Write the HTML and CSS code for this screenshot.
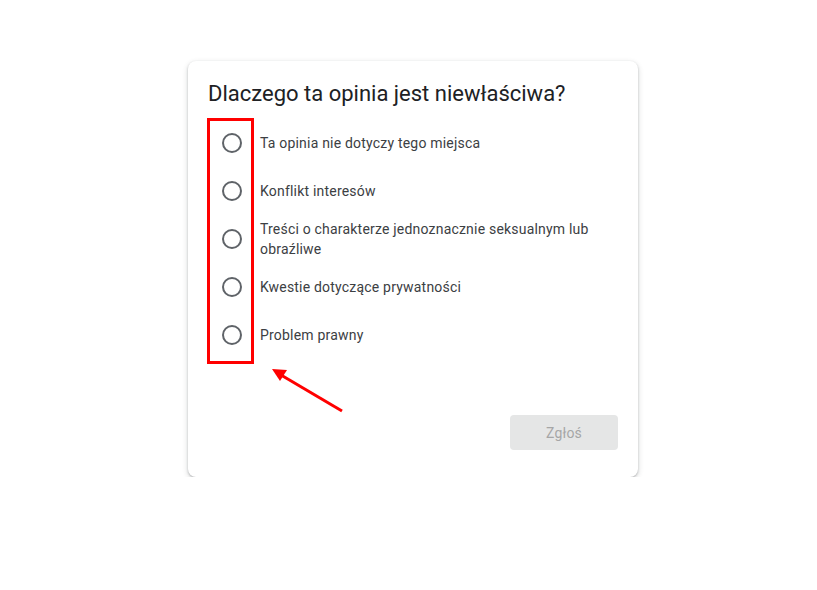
FILE: index.html
```html
<!DOCTYPE html>
<html lang="pl">
<head>
<meta charset="utf-8">
<link rel="stylesheet" href="styles.css">
</head>
<body>
<div class="page">
  <div class="card">
    <h1 class="title">Dlaczego ta opinia jest niewłaściwa?</h1>
    <div class="options">
      <div class="highlight"></div>
      <label class="option"><span class="radio"></span><span class="label">Ta opinia nie dotyczy tego miejsca</span></label>
      <label class="option"><span class="radio"></span><span class="label">Konflikt interesów</span></label>
      <label class="option"><span class="radio"></span><span class="label">Treści o charakterze jednoznacznie seksualnym lub obraźliwe</span></label>
      <label class="option"><span class="radio"></span><span class="label">Kwestie dotyczące prywatności</span></label>
      <label class="option"><span class="radio"></span><span class="label">Problem prawny</span></label>
      <svg class="arrow" width="90" height="60" viewBox="0 0 90 60">
        <line x1="79" y1="50" x2="18" y2="14" stroke="#ff0000" stroke-width="3"/>
        <polygon points="9,8 24,9 17,20" fill="#ff0000"/>
      </svg>
    </div>
    <div class="actions">
      <button class="submit" disabled>Zgłoś</button>
    </div>
  </div>
</div>
</body>
</html>
```
FILE: styles.css
```css
* { box-sizing: border-box; }
html, body { margin: 0; padding: 0; background: #fff; }
body { font-family: Roboto, "Noto Sans", Arial, sans-serif; }
.page {
  padding-top: 61px;
  padding-left: 188px;
}
.card {
  width: 450px;
  height: 416px;
  background: #fff;
  border-radius: 8px;
  box-shadow: 0 1px 2px rgba(60,64,67,0.3), 0 2px 5px 1px rgba(60,64,67,0.15);
  padding: 19px 20px 0 20px;
  display: flex;
  flex-direction: column;
}
.title {
  margin: 0;
  font-size: 22px;
  font-weight: 400;
  line-height: 28px;
  color: #202124;
  height: 39px;
}
.options {
  position: relative;
  display: flex;
  flex-direction: column;
}
.option {
  display: flex;
  align-items: center;
  min-height: 48px;
  padding-right: 10px;
}
.radio {
  flex: none;
  width: 20px;
  height: 20px;
  border: 2px solid #5f6368;
  border-radius: 50%;
  margin-left: 14px;
  margin-right: 18px;
}
.label {
  font-size: 14px;
  line-height: 20px;
  letter-spacing: 0.2px;
  color: #3c4043;
}
.highlight {
  position: absolute;
  left: -1px;
  top: -1px;
  width: 47px;
  height: 246px;
  border: 3px solid #ff0000;
}
.arrow {
  position: absolute;
  left: 55px;
  top: 242px;
}
.actions {
  margin-top: auto;
  padding-bottom: 27px;
  display: flex;
  justify-content: flex-end;
}
.submit {
  width: 108px;
  height: 35px;
  border: none;
  border-radius: 4px;
  background: #e5e6e6;
  color: #a6a6a6;
  font-family: Roboto, "Noto Sans", Arial, sans-serif;
  font-size: 14px;
  letter-spacing: 0.2px;
}
```
